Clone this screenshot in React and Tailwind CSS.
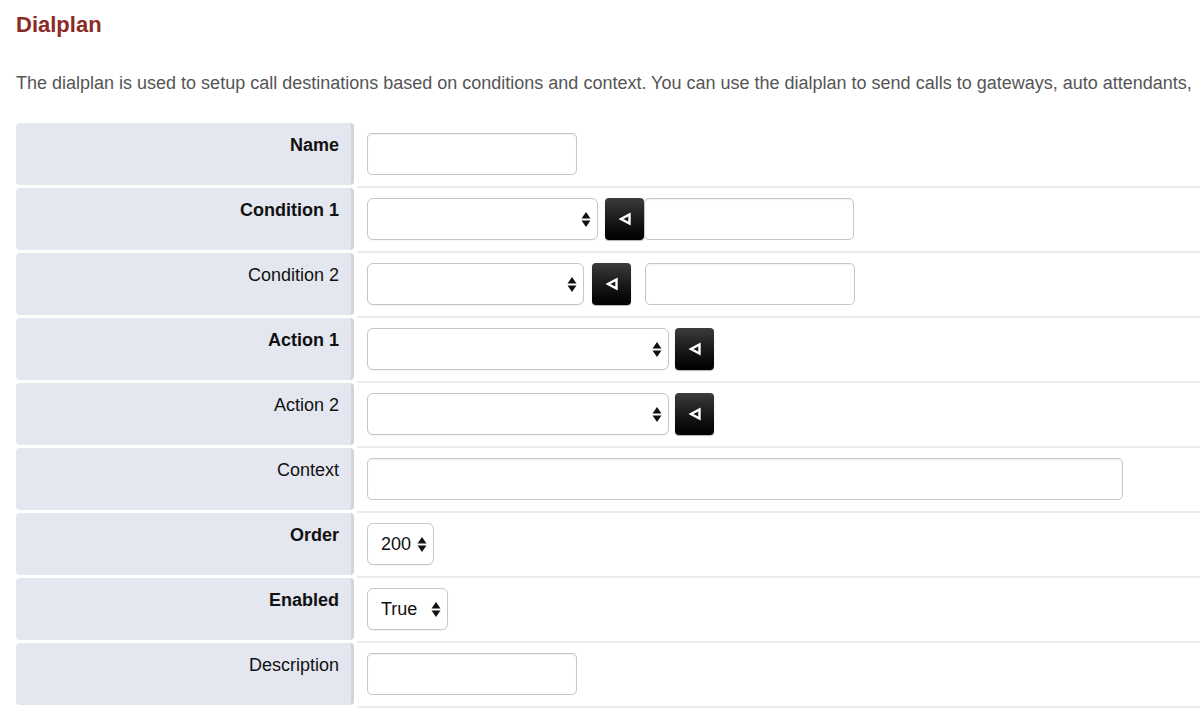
import React from 'react';

const rows = [
  { label: 'Name', bold: true, kind: 'name' },
  { label: 'Condition 1', bold: true, kind: 'cond1' },
  { label: 'Condition 2', bold: false, kind: 'cond2' },
  { label: 'Action 1', bold: true, kind: 'action' },
  { label: 'Action 2', bold: false, kind: 'action' },
  { label: 'Context', bold: false, kind: 'context' },
  { label: 'Order', bold: true, kind: 'order' },
  { label: 'Enabled', bold: true, kind: 'enabled' },
  { label: 'Description', bold: false, kind: 'desc' },
];

function Arrows() {
  return (
    <svg width="10" height="17" viewBox="0 0 10 17" className="shrink-0">
      <path d="M5 1 L9.5 7.5 L0.5 7.5 Z" fill="#111" />
      <path d="M0.5 9.5 L9.5 9.5 L5 16 Z" fill="#111" />
    </svg>
  );
}

function Input({ w }) {
  return <div className={`h-[42px] ${w} shrink-0 rounded-[5px] border border-[#c6c6c6] bg-white shadow-[inset_0_1px_2px_rgba(0,0,0,0.06)]`} />;
}

function Select({ w, value }) {
  return (
    <div className={`h-[42px] ${w} shrink-0 flex items-center justify-between rounded-[6px] border border-[#c6c6c6] bg-white pl-[13px] pr-[6px] text-[18px] text-[#111] shadow-[0_1px_1px_rgba(0,0,0,0.04)]`}>
      <span>{value}</span>
      <Arrows />
    </div>
  );
}

function Btn() {
  return (
    <div className="h-[42px] w-[39px] shrink-0 flex items-center justify-center rounded-[4px] bg-gradient-to-b from-[#3c3c3c] to-[#020202] shadow-[0_1px_1px_rgba(0,0,0,0.3)]">
      <svg width="14" height="14" viewBox="0 0 14 14">
        <path d="M11.5 2.5 L11.5 11.5 L3 7 Z" fill="none" stroke="#fff" strokeWidth="2.4" strokeLinejoin="miter" />
      </svg>
    </div>
  );
}

function Field({ kind }) {
  switch (kind) {
    case 'name':
    case 'desc':
      return <Input w="w-[210px]" />;
    case 'cond1':
      return (
        <div className="flex items-center">
          <Select w="w-[231px]" />
          <div className="ml-[7px]"><Btn /></div>
          <Input w="w-[210px]" />
        </div>
      );
    case 'cond2':
      return (
        <div className="flex items-center">
          <Select w="w-[217px]" />
          <div className="ml-[8px]"><Btn /></div>
          <div className="ml-[14px]"><Input w="w-[210px]" /></div>
        </div>
      );
    case 'action':
      return (
        <div className="flex items-center">
          <Select w="w-[302px]" />
          <div className="ml-[6px]"><Btn /></div>
        </div>
      );
    case 'context':
      return <Input w="w-[756px]" />;
    case 'order':
      return <Select w="w-[67px]" value="200" />;
    case 'enabled':
      return <Select w="w-[81px]" value="True" />;
    default:
      return null;
  }
}

export default function App() {
  return (
    <div className="min-h-[726px] w-[1200px] overflow-hidden bg-white font-['Liberation_Sans',Arial,sans-serif]">
      <div className="pl-[16px]">
        <h1 className="pt-[10px] text-[22px] font-bold leading-[30px] text-[#8c2a26]">Dialplan</h1>
        <p className="mt-[31px] whitespace-nowrap text-[18px] leading-[24px] text-[#555]">
          The dialplan is used to setup call destinations based on conditions and context. You can use the dialplan to send calls to gateways, auto attendants,
        </p>
        <div className="mt-[28px]">
          {rows.map((r) => (
            <div key={r.label} className="flex h-[65px] items-start">
              <div className={`h-[62px] w-[338px] shrink-0 rounded-[4px] border-r-[3px] border-[#d2d4db] bg-[#e4e7ef] pr-[12px] pt-[11px] text-right text-[18px] leading-[22px] text-[#111] ${r.bold ? 'font-bold' : 'font-normal'}`}>
                {r.label}
              </div>
              <div className="ml-[3px] h-[65px] flex-1 border-b-2 border-[#ececec] pl-[10px] pt-[10px]">
                <Field kind={r.kind} />
              </div>
            </div>
          ))}
        </div>
      </div>
    </div>
  );
}
